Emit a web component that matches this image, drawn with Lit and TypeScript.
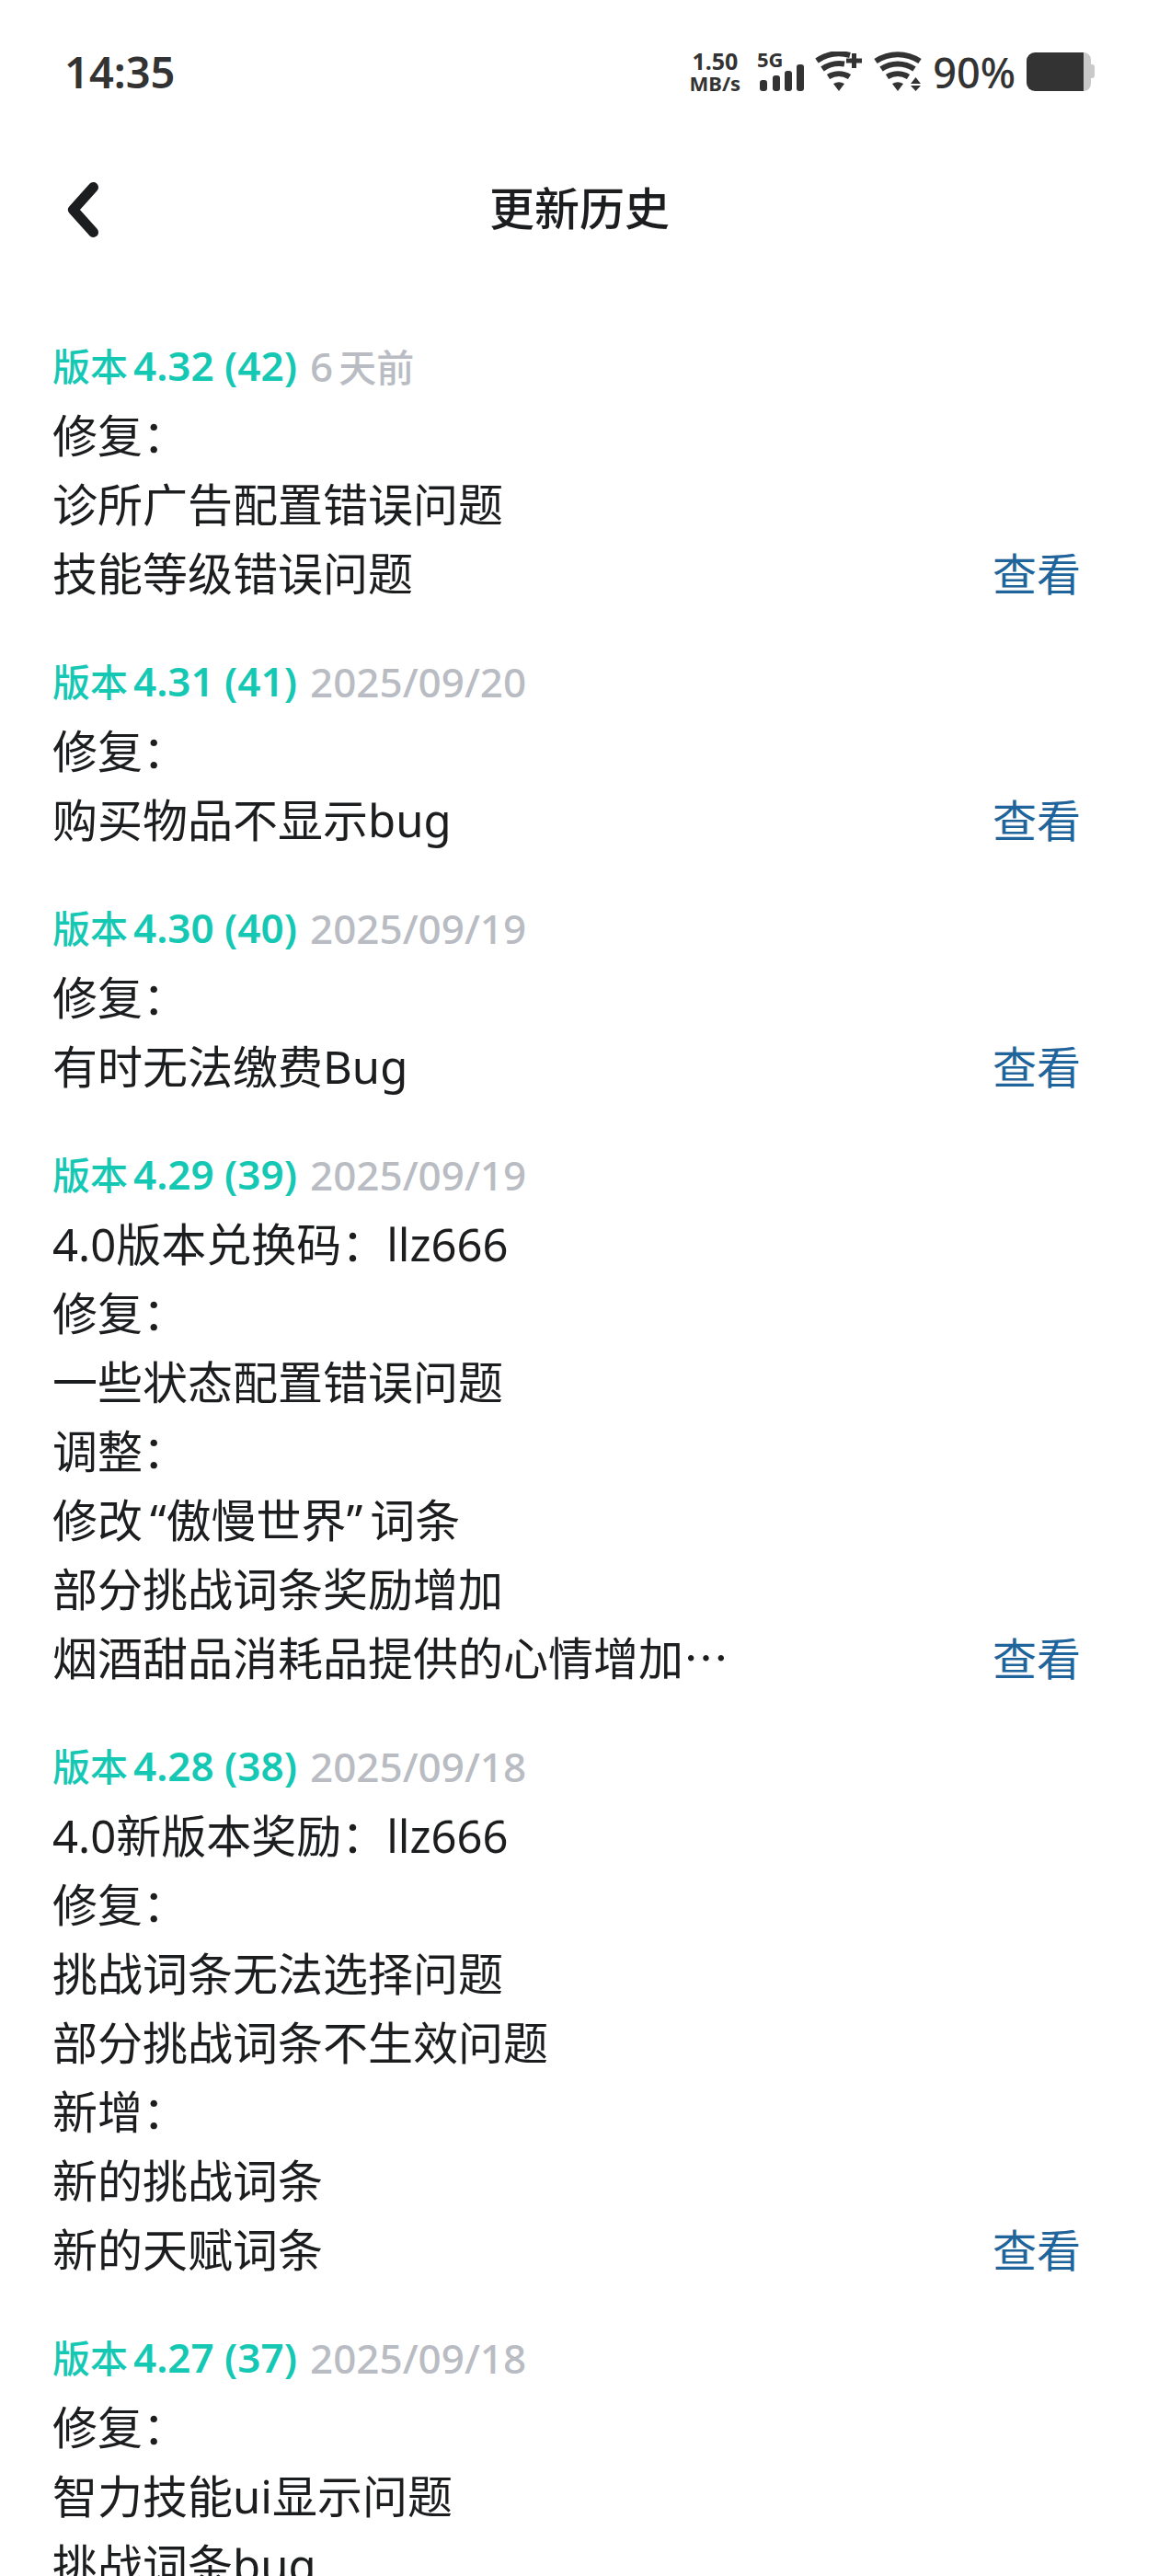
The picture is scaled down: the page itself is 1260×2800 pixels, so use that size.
import { LitElement, html, css, nothing } from "lit";
import { customElement, property } from "lit/decorators.js";

interface Release {
  version: string;
  build: string;
  date: string;
  lines: string[];
  more?: boolean;
}

const RELEASES: Release[] = [
  { version: "4.32", build: "42", date: "6天前", lines: ["修复：", "诊所广告配置错误问题", "技能等级错误问题"], more: true },
  { version: "4.31", build: "41", date: "2025/09/20", lines: ["修复：", "购买物品不显示bug"], more: true },
  { version: "4.30", build: "40", date: "2025/09/19", lines: ["修复：", "有时无法缴费Bug"], more: true },
  {
    version: "4.29",
    build: "39",
    date: "2025/09/19",
    lines: [
      "4.0版本兑换码：llz666",
      "修复：",
      "一些状态配置错误问题",
      "调整：",
      "修改“傲慢世界”词条",
      "部分挑战词条奖励增加",
      "烟酒甜品消耗品提供的心情增加…",
    ],
    more: true,
  },
  {
    version: "4.28",
    build: "38",
    date: "2025/09/18",
    lines: [
      "4.0新版本奖励：llz666",
      "修复：",
      "挑战词条无法选择问题",
      "部分挑战词条不生效问题",
      "新增：",
      "新的挑战词条",
      "新的天赋词条",
    ],
    more: true,
  },
  { version: "4.27", build: "37", date: "2025/09/18", lines: ["修复：", "智力技能ui显示问题", "挑战词条bug"] },
];

@customElement("status-bar")
export class StatusBar extends LitElement {
  static styles = css`
    :host {
      display: flex;
      align-items: center;
      justify-content: space-between;
      height: 156px;
      padding: 0 70px;
      box-sizing: border-box;
      color: #333;
      flex: none;
    }
    .time {
      font-size: 47px;
      font-weight: 600;
    }
    .right {
      display: flex;
      align-items: center;
    }
    .speed {
      display: flex;
      flex-direction: column;
      align-items: center;
      font-weight: 700;
      margin-right: 18px;
    }
    .rate {
      font-size: 25px;
      line-height: 24px;
    }
    .unit {
      font-size: 22px;
      line-height: 24px;
    }
    .percent {
      font-size: 45px;
      font-weight: 500;
      margin: 0 12px 0 10px;
    }
    svg {
      display: block;
    }
    .signal {
      margin-right: 12px;
    }
    .wifi {
      margin-right: 12px;
    }
    .network {
      font-size: 22px;
      font-weight: 700;
    }
  `;

  render() {
    return html`
      <span class="time">14:35</span>
      <div class="right">
        <div class="speed"><span class="rate">1.50</span><span class="unit">MB/s</span></div>
        <svg class="signal" width="51" height="60" viewBox="0 -8 51 60" fill="#333">
          <text class="network" x="0" y="17">5G</text>
          <rect x="3" y="31" width="8" height="12" rx="3" />
          <rect x="17" y="26" width="8" height="17" rx="3" />
          <rect x="30" y="21" width="8" height="22" rx="3" />
          <rect x="43" y="14" width="8" height="29" rx="3" />
        </svg>
        <svg class="wifi" width="52" height="44" viewBox="0 0 52 44">
          <g fill="none" stroke="#333" stroke-width="6">
            <path d="M2 10A43 43 0 0 1 38 4" />
            <path d="M8 19A32 32 0 0 1 32 13.5" />
            <path d="M14.5 27.5A22 22 0 0 1 37.5 27.5" />
          </g>
          <path d="M20 35Q26 31.5 32 35L26 43Z" fill="#333" />
          <path d="M42.5 2V18M34 10H51" stroke="#333" stroke-width="5" />
        </svg>
        <svg width="54" height="44" viewBox="0 0 54 44">
          <g fill="none" stroke="#333" stroke-width="6">
            <path d="M2 10.5A43 43 0 0 1 50 10.5" />
            <path d="M8 19A32 32 0 0 1 44 19" />
            <path d="M14.5 27.5A22 22 0 0 1 37.5 27.5" />
          </g>
          <path d="M20 35Q26 31.5 32 35L26 43Z" fill="#333" />
          <path d="M45.5 28L51 35H40ZM40 37H51L45.5 43Z" fill="#333" />
        </svg>
        <span class="percent">90%</span>
        <svg width="74" height="42" viewBox="0 0 74 42">
          <path d="M62 0a8 8 0 0 1 8 8v5h1a3 3 0 0 1 3 3v9a3 3 0 0 1-3 3h-1v6a8 8 0 0 1-8 8Z" fill="#c9c9c9" />
          <path d="M62 0H9a9 9 0 0 0-9 9v24a9 9 0 0 0 9 9h53Z" fill="#333" />
        </svg>
      </div>
    `;
  }
}

@customElement("release-entry")
export class ReleaseEntry extends LitElement {
  @property({ attribute: false }) release!: Release;

  static styles = css`
    :host {
      display: block;
      padding-bottom: 42px;
    }
    .heading {
      display: flex;
      margin: 0;
      font-size: 41px;
      font-weight: 500;
      line-height: 76px;
      white-space: pre;
    }
    .version {
      color: #14c8b4;
    }
    .number {
      margin-left: 6px;
      font-size: 44px;
      font-weight: 600;
      line-height: 1;
    }
    .date {
      margin-left: 14px;
      color: #b9bcc2;
      font-size: 44px;
    }
    .unit {
      margin-left: 6px;
      font-size: 41px;
      line-height: 1;
    }
    .body {
      display: flex;
      align-items: flex-end;
      justify-content: space-between;
      gap: 48px;
    }
    .text {
      color: #1c1d1f;
      font-size: 49px;
      line-height: 75px;
    }
    .line {
      margin: 0;
    }
    .open {
      margin-left: 8px;
    }
    .close {
      margin-right: 8px;
    }
    .dots {
      font-family: "Noto Sans CJK SC", sans-serif;
      line-height: 1;
    }
    .more {
      flex: none;
      color: #1f659b;
      font-size: 48px;
      line-height: 75px;
      text-decoration: none;
    }
  `;

  private renderLine(text: string) {
    return text.split(/([“”…])/).map((part) => {
      if (part === "“") return html`<span class="open">“</span>`;
      if (part === "”") return html`<span class="close">”</span>`;
      if (part === "…") return html`<span class="dots">…</span>`;
      return part;
    });
  }

  private renderDate(date: string) {
    const relative = date.match(/^(\d+)(\D+)$/);
    return relative ? html`${relative[1]}<span class="unit">${relative[2]}</span>` : date;
  }

  render() {
    const { version, build, date, lines, more } = this.release;
    return html`
      <h2 class="heading"><span class="version">版本<span class="number">${version} (${build})</span></span><span class="date">${this.renderDate(date)}</span></h2>
      <div class="body">
        <div class="text">${lines.map((l) => html`<p class="line">${this.renderLine(l)}</p>`)}</div>
        ${more ? html`<a class="more" href="#v${version}">查看</a>` : nothing}
      </div>
    `;
  }
}

@customElement("app-root")
export class AppRoot extends LitElement {
  static styles = css`
    :host {
      display: flex;
      flex-direction: column;
      height: 100vh;
      overflow: hidden;
      background: #fff;
      font-family: "Noto Sans", "Noto Sans CJK SC", sans-serif;
    }
    .nav {
      display: grid;
      grid-template-columns: 1fr auto 1fr;
      align-items: center;
      flex: none;
      height: 144px;
      padding: 0 57px;
    }
    .back {
      justify-self: start;
      display: flex;
      padding: 12px;
      border: 0;
      background: none;
    }
    .title {
      margin: 0;
      color: #1c1d1f;
      font-size: 49px;
      font-weight: 500;
      line-height: 72px;
      padding-bottom: 4px;
    }
    .list {
      flex: 1;
      min-height: 0;
      overflow: hidden;
      padding: 60px 85px 0 57px;
    }
  `;

  render() {
    return html`
      <status-bar></status-bar>
      <header class="nav">
        <button class="back" aria-label="返回">
          <svg width="40" height="62" viewBox="0 0 40 62">
            <path d="M32.5 6.5L10.5 31L32.5 55.5" fill="none" stroke="#1c1d1f" stroke-width="11" stroke-linecap="round" stroke-linejoin="round" />
          </svg>
        </button>
        <h1 class="title">更新历史</h1>
      </header>
      <main class="list">${RELEASES.map((r) => html`<release-entry .release=${r}></release-entry>`)}</main>
    `;
  }
}
